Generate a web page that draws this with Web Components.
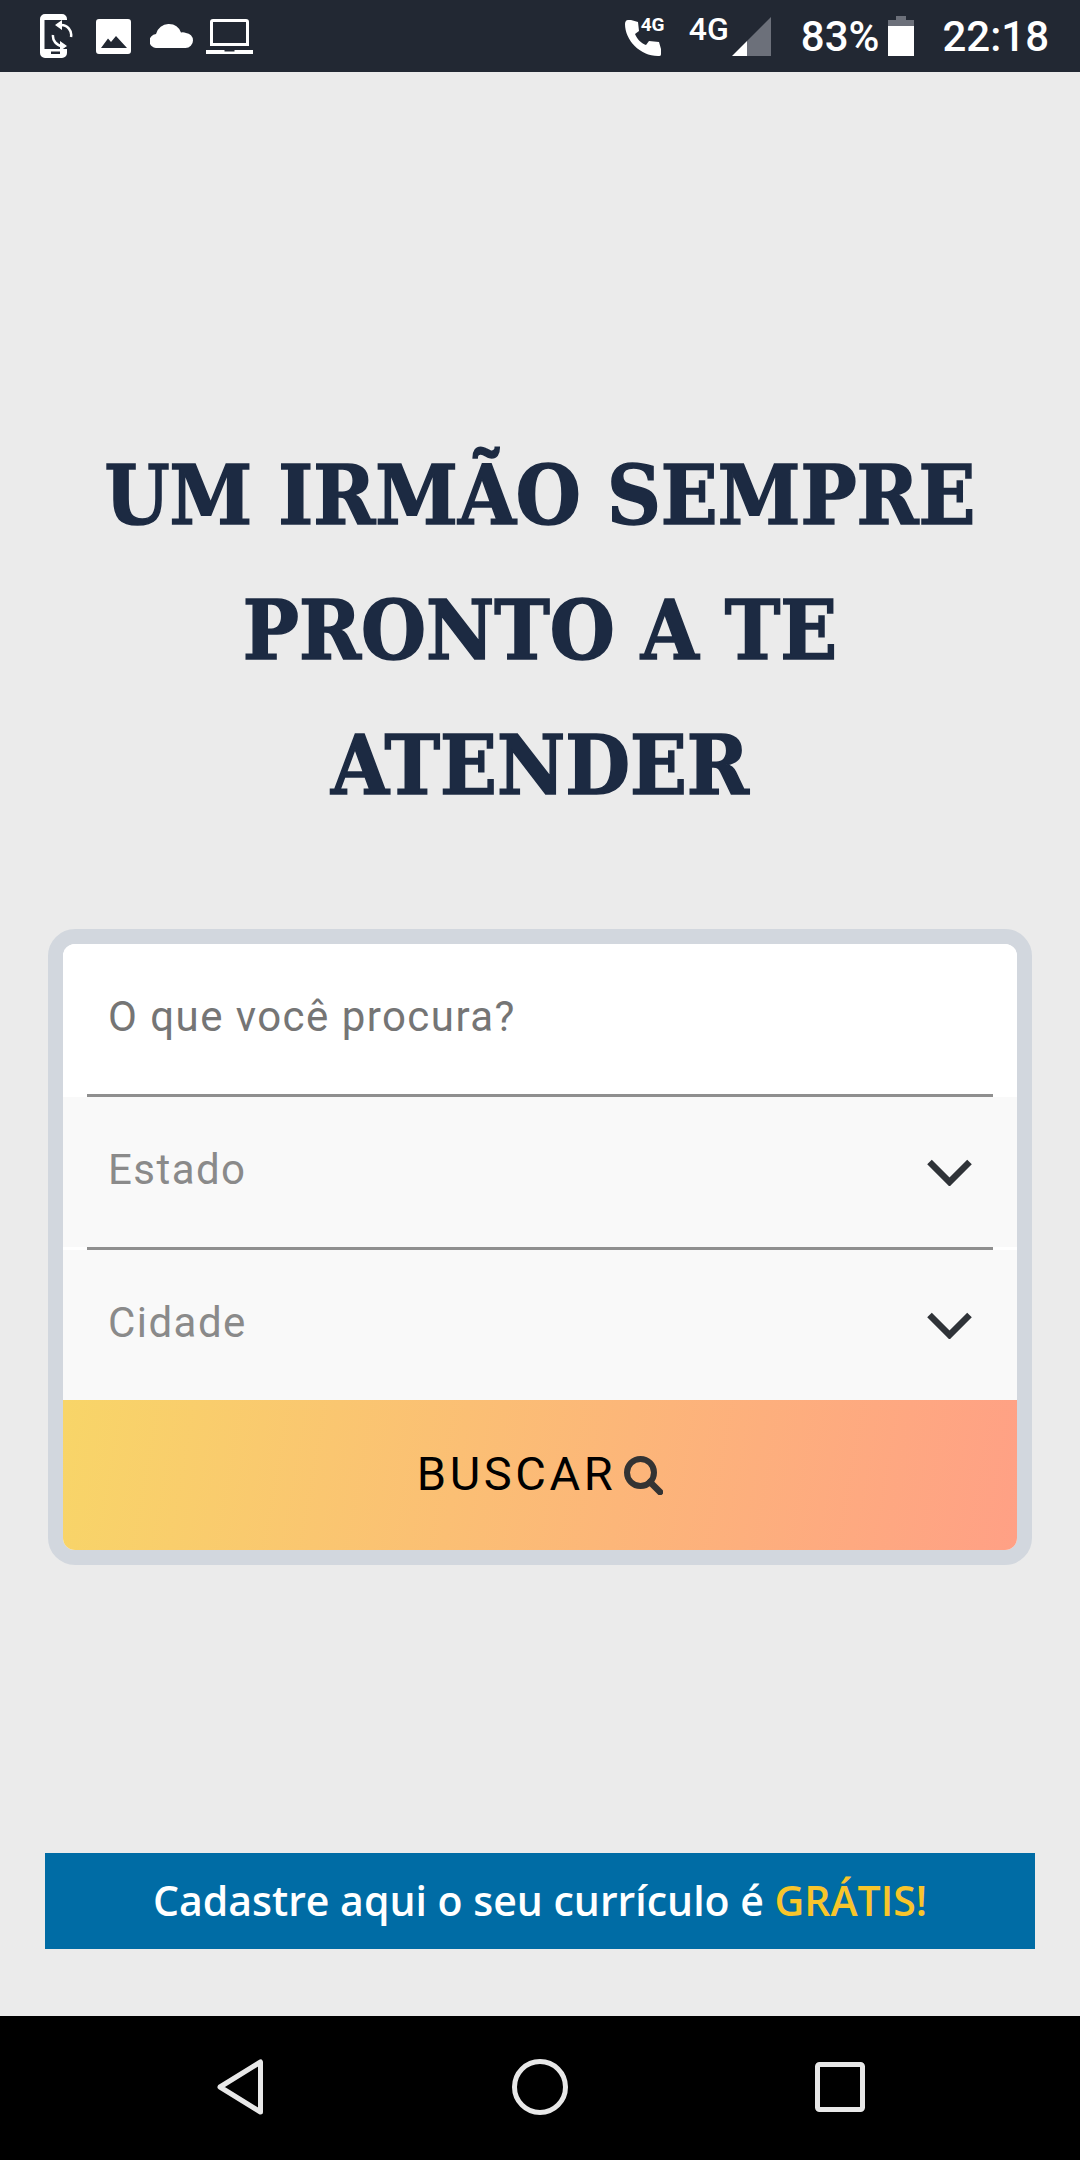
<!DOCTYPE html>
<html lang="pt-BR">
<head>
<meta charset="utf-8">
<title>Um irmão sempre pronto a te atender</title>
<style>
	html, body { margin: 0; padding: 0; background: #ebebeb; }
	app-screen { width: 1080px; height: 2160px; }
</style>
</head>
<body>
<app-screen>
	<status-bar></status-bar>
	<hero-title>UM IRMÃO SEMPRE<br>PRONTO A TE<br>ATENDER</hero-title>
	<search-card>
		<search-field kind="input" label="O que você procura?"></search-field>
		<search-field kind="select" label="Estado"></search-field>
		<search-field kind="select" last label="Cidade"></search-field>
		<search-button>BUSCAR</search-button>
	</search-card>
	<promo-banner>Cadastre aqui o seu currículo é <b slot="accent">GRÁTIS!</b></promo-banner>
	<nav-bar></nav-bar>
</app-screen>

<script>
(function() {
	function define(name, html, setup) {
		let template = document.createElement("template");
		template.innerHTML = html;
		customElements.define(name, class extends HTMLElement {
			constructor() {
				super();
				this.attachShadow({mode: "open"});
				this.shadowRoot.appendChild(template.content.cloneNode(true));
			}
			connectedCallback() {
				if (setup) setup.call(this, this.shadowRoot);
			}
		});
	}

	define("app-screen", `
		<style>
		:host {
			display: flex;
			flex-direction: column;
			background: #ebebeb;
			overflow: hidden;
		}
		</style>
		<slot></slot>
	`);

	define("status-bar", `
		<style>
		:host {
			display: flex;
			justify-content: space-between;
			align-items: center;
			height: 72px;
			background: #222833;
			color: #fff;
			font-family: Roboto, sans-serif;
			font-weight: 500;
		}
		.group { display: flex; align-items: center; }
		svg { display: block; fill: #fff; }
		.left { padding-left: 40px; gap: 23px; }
		.right { padding-right: 31px; }
		.call { position: relative; width: 40px; height: 40px; margin-right: 24px; margin-left: -3px; }
		.call b { position: absolute; left: 16px; top: -3px; font-size: 19px; font-weight: 700; letter-spacing: -.3px; }
		.net { font-size: 32px; font-weight: 500; margin-top: -15px; margin-right: 3px; }
		.level { font-size: 42px; margin-left: 30px; margin-right: 9px; }
		.clock { font-size: 42px; margin-left: 28px; }
		</style>
		<div class="group left">
			<svg width="33" height="44" viewBox="0 0 33 44">
				<path fill-rule="evenodd" d="M5 0h17a5 5 0 0 1 5 5v1H4.500v29H27v4a5 5 0 0 1-5 5H5a5 5 0 0 1-5-5V5a5 5 0 0 1 5-5zM11 37.500v2.500h9v-2.500z"/>
				<path fill="none" stroke="#fff" stroke-width="2.500" d="M21 11a10 10 0 0 1 10 12M13 21a10 10 0 0 0 9 11"/>
				<path d="M22 6l-7 5 7 5zM20 27l7 5-7 5z"/>
			</svg>
			<svg width="35" height="35" viewBox="0 0 35 35">
				<path fill-rule="evenodd" d="M3 0h29a3 3 0 0 1 3 3v29a3 3 0 0 1-3 3H3a3 3 0 0 1-3-3V3a3 3 0 0 1 3-3zM5 29h26L20 17l-5 6-3-3.500z"/>
			</svg>
			<svg width="43" height="24" viewBox="0 0 43 24" style="margin-left:-4px;margin-right:-12px">
				<path d="M7 24a7 7 0 0 1-1-14 13 13 0 0 1 13-10 13 13 0 0 1 12 8.500 8 8 0 0 1 5 .5 7.500 7.500 0 0 1 7 7.500 7.500 7.500 0 0 1-7.500 7.500z"/>
			</svg>
			<svg width="47" height="35" viewBox="0 0 47 35" style="margin-left:2px">
				<path fill-rule="evenodd" d="M7 0h33a3 3 0 0 1 3 3v24H4V3a3 3 0 0 1 3-3zM7 3v21h33V3zM0 31h18.500v1.500h10V31H47v4H0z"/>
			</svg>
		</div>
		<div class="group right">
			<div class="call">
				<svg width="36" height="36" viewBox="0 0 36 36" style="margin-top:4px">
					<path d="M6 0l7 2 1 9-4 3c2 5 6 9 11 11l3-4 10 1 2 7v5c0 2-1 2-3 2C15 36 0 20 0 4c0-2 1-4 3-4z"/>
				</svg>
				<b>4G</b>
			</div>
			<span class="net">4G</span>
			<svg width="39" height="39" viewBox="0 0 39 39">
				<path fill="#6c707a" d="M39 0v39H15V24z"/>
				<path d="M0 39l15-15v15z"/>
			</svg>
			<span class="level">83%</span>
			<svg width="26" height="40" viewBox="0 0 26 40">
				<path fill="#6c707a" d="M8 0h10v4h8v10H0V4h8z"/>
				<path d="M0 10h26v30H0z"/>
			</svg>
			<span class="clock">22:18</span>
		</div>
	`);

	define("hero-title", `
		<style>
		:host {
			display: block;
			margin-top: 356px;
			text-align: center;
			font-family: "DejaVu Serif Condensed", "DejaVu Serif", serif;
			font-weight: 700;
			font-size: 83px;
			line-height: 135px;
			color: #1c2a42;
			-webkit-text-stroke: 1.5px #1c2a42;
		}
		</style>
		<slot></slot>
	`);

	define("search-card", `
		<style>
		:host {
			display: flex;
			flex-direction: column;
			margin: 96px 48px 0;
			border: 15px solid #d2d7de;
			border-radius: 27px;
			background: #fff;
			overflow: hidden;
		}
		</style>
		<slot></slot>
	`);

	define("search-field", `
		<style>
		:host {
			display: flex;
			flex-direction: column;
			height: 153px;
			background: #f9f9f9;
			font-family: Roboto, sans-serif;
			font-size: 42px;
			letter-spacing: 1.45px;
			color: #8a8a8a;
		}
		:host([kind="input"]) { background: #fff; color: #757575; }
		:host([last]) { height: 150px; }
		.row {
			flex: 1;
			display: flex;
			align-items: center;
			justify-content: space-between;
			padding: 0 45px 6px 45px;
		}
		.arrow { display: none; margin-top: 6px; }
		:host([kind="select"]) .arrow { display: block; }
		:host([last]) .rule { display: none; }
		.rule { padding: 0 24px; background: #fff; }
		.rule div { height: 3px; background: #8f8f8f; }
		</style>
		<div class="row">
			<span class="label"></span>
			<svg class="arrow" width="45" height="27" viewBox="0 0 45 27">
				<path fill="none" stroke="#2f3338" stroke-width="6.500" d="M2.500 3l20 20 20-20"/>
			</svg>
		</div>
		<div class="rule"><div></div></div>
	`, function(root) {
		root.querySelector(".label").textContent = this.getAttribute("label");
	});

	define("search-button", `
		<style>
		:host {
			display: flex;
			align-items: center;
			justify-content: center;
			gap: 8px;
			height: 147px;
			padding-bottom: 3px;
			background: linear-gradient(100deg, #f8d568, #ffa085);
			font-family: Roboto, sans-serif;
			font-size: 47px;
			letter-spacing: 3.6px;
			color: #000;
		}
		svg { display: block; margin-top: 4px; }
		</style>
		<slot></slot>
		<svg width="39" height="39" viewBox="0 0 39 39">
			<circle cx="16.500" cy="16.500" r="13.500" fill="none" stroke="#333" stroke-width="6"/>
			<path d="M26 26l10 10" stroke="#333" stroke-width="6.500" stroke-linecap="round"/>
		</svg>
	`);

	define("promo-banner", `
		<style>
		:host {
			display: flex;
			align-items: center;
			justify-content: center;
			height: 96px;
			margin: 288px 45px 0;
			background: #006ca5;
			color: #fff;
			font-family: "Open Sans", sans-serif;
			font-weight: 600;
			font-size: 41px;
			white-space: pre;
		}
		span { margin-top: -2px; }
		::slotted(b) { color: #f8c52b; font-weight: 600; }
		</style>
		<span><slot></slot><slot name="accent"></slot></span>
	`);

	define("nav-bar", `
		<style>
		:host {
			display: grid;
			grid-template-columns: repeat(3, 300px);
			justify-content: center;
			justify-items: center;
			align-items: center;
			height: 144px;
			margin-top: auto;
			background: #000;
		}
		svg { display: block; margin-top: -2px; fill: none; stroke: #e8e8e8; stroke-width: 5; stroke-linejoin: round; }
		</style>
		<svg width="46" height="56" viewBox="0 0 46 56"><path d="M43.500 3v50L3 28z"/></svg>
		<svg width="56" height="56" viewBox="0 0 56 56"><circle cx="28" cy="28" r="25.500"/></svg>
		<svg width="50" height="50" viewBox="0 0 50 50"><rect x="2.500" y="2.500" width="45" height="45" rx="2"/></svg>
	`);
})();
</script>
</body>
</html>
